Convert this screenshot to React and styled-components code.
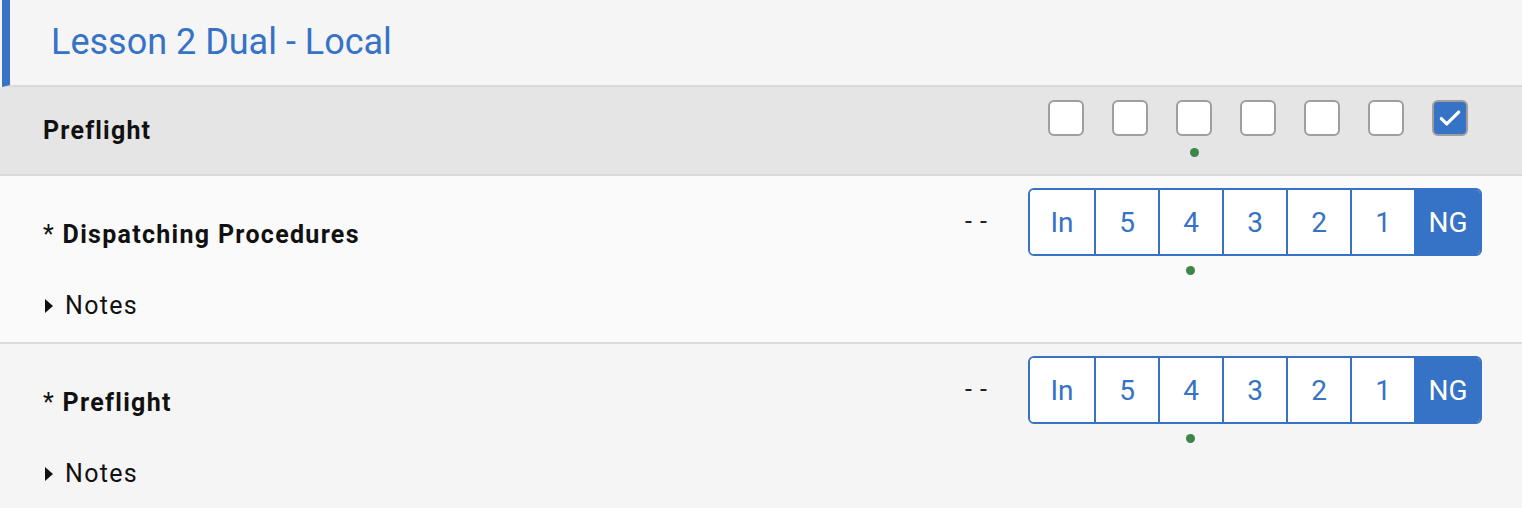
import React from "react";
import styled, { createGlobalStyle, css } from "styled-components";

const BLUE = "#3672c5";
const GREEN = "#3e8549";

const GlobalStyle = createGlobalStyle`
  html, body {
    margin: 0;
    padding: 0;
    background: #f5f5f5;
    font-family: Roboto, "Liberation Sans", sans-serif;
  }
  * { box-sizing: border-box; }
`;

const Page = styled.div`
  width: 1522px;
  height: 508px;
  overflow: hidden;
`;

const Header = styled.header`
  height: 87px;
  margin-left: 2px;
  border-left: 8px solid ${BLUE};
  border-bottom: 2px solid #d9d9d9;
  background: #f5f5f5;
  display: flex;
  align-items: center;
  padding-left: 41px;
`;

const Title = styled.h1`
  margin: 0 0 1px;
  font-size: 36px;
  font-weight: 400;
  color: ${BLUE};
`;

const Section = styled.div`
  height: 89px;
  background: #e5e5e5;
  border-bottom: 2px solid #d9d9d9;
  display: flex;
  justify-content: space-between;
  padding: 13px 54px 0 43px;
`;

const SectionLabel = styled.div`
  font-size: 25px;
  font-weight: 700;
  letter-spacing: 1.2px;
  line-height: 28px;
  color: #111;
  padding-top: 17px;
`;

const Boxes = styled.div`
  display: flex;
  gap: 28px;
`;

const BoxCol = styled.div`
  display: flex;
  flex-direction: column;
  align-items: center;
  width: 36px;
`;

const Box = styled.div`
  width: 36px;
  height: 36px;
  border: 2px solid #9e9e9e;
  border-radius: 6px;
  background: ${p => (p.checked ? BLUE : "#fff")};
  display: flex;
  align-items: center;
  justify-content: center;
`;

const Dot = styled.span`
  width: 9px;
  height: 9px;
  border-radius: 50%;
  background: ${p => (p.show ? GREEN : "transparent")};
  margin-top: ${p => p.offset}px;
`;

const Row = styled.div`
  display: flex;
  justify-content: space-between;
  padding: 12px 40px 0 43px;
  height: ${p => (p.last ? 164 : 168)}px;
  background: ${p => (p.alt ? "#f5f5f5" : "#fafafa")};
  ${p =>
    !p.last &&
    css`
      border-bottom: 2px solid #dcdcdc;
    `}
`;

const Left = styled.div`
  display: flex;
  flex-direction: column;
  padding-top: 33px;
`;

const Label = styled.div`
  font-size: 25px;
  line-height: 28px;
  letter-spacing: 1.3px;
  color: #111;
  b { font-weight: 700; }
`;

const Notes = styled.div`
  margin-top: 43px;
  display: flex;
  align-items: center;
  font-size: 25px;
  letter-spacing: 1.3px;
  line-height: 28px;
  color: #111;
  padding-left: 2px;
`;

const Caret = styled.span`
  width: 0;
  height: 0;
  border-top: 7px solid transparent;
  border-bottom: 7px solid transparent;
  border-left: 8px solid #111;
  margin-right: 12px;
`;

const Right = styled.div`
  display: flex;
  align-items: flex-start;
`;

const Dash = styled.div`
  font-size: 25px;
  line-height: 68px;
  color: #222;
  margin-right: 40px;
  letter-spacing: 1px;
`;

const Scale = styled.div`
  display: flex;
  flex-direction: column;
`;

const Group = styled.div`
  display: flex;
  height: 68px;
  border: 2px solid ${BLUE};
  border-radius: 6px;
  overflow: hidden;
`;

const Seg = styled.div`
  width: ${p => (p.wide ? 66 : 64)}px;
  display: flex;
  align-items: center;
  justify-content: center;
  font-size: 28px;
  color: ${p => (p.active ? "#fff" : BLUE)};
  background: ${p => (p.active ? BLUE : "#fff")};
  & + & { border-left: 2px solid ${BLUE}; }
`;

const DotRow = styled.div`
  display: flex;
  padding-left: 2px;
`;

const DotCell = styled.div`
  width: ${p => (p.wide ? 66 : 64)}px;
  display: flex;
  justify-content: center;
`;

const grades = ["In", "5", "4", "3", "2", "1", "NG"];

const Check = () => (
  <svg width="26" height="26" viewBox="0 0 24 24" fill="none">
    <path d="M4 12.5l5 5L20 6.5" stroke="#fff" strokeWidth="3" strokeLinecap="round" strokeLinejoin="round" />
  </svg>
);

const Item = ({ title, alt, last }) => (
  <Row alt={alt} last={last}>
    <Left>
      <Label>* <b>{title}</b></Label>
      <Notes><Caret />Notes</Notes>
    </Left>
    <Right>
      <Dash>- -</Dash>
      <Scale>
        <Group>
          {grades.map((g, i) => (
            <Seg key={g} active={g === "NG"} wide={i === grades.length - 1}>{g}</Seg>
          ))}
        </Group>
        <DotRow>
          {grades.map((g, i) => (
            <DotCell key={g} wide={i === grades.length - 1}>
              <Dot show={g === "4"} offset={10} />
            </DotCell>
          ))}
        </DotRow>
      </Scale>
    </Right>
  </Row>
);

export default function App() {
  return (
    <Page>
      <GlobalStyle />
      <Header>
        <Title>Lesson 2 Dual - Local</Title>
      </Header>
      <Section>
        <SectionLabel>Preflight</SectionLabel>
        <Boxes>
          {[0, 1, 2, 3, 4, 5, 6].map(i => (
            <BoxCol key={i}>
              <Box checked={i === 6}>{i === 6 && <Check />}</Box>
              <Dot show={i === 2} offset={12} />
            </BoxCol>
          ))}
        </Boxes>
      </Section>
      <Item title="Dispatching Procedures" />
      <Item title="Preflight" alt last />
    </Page>
  );
}
